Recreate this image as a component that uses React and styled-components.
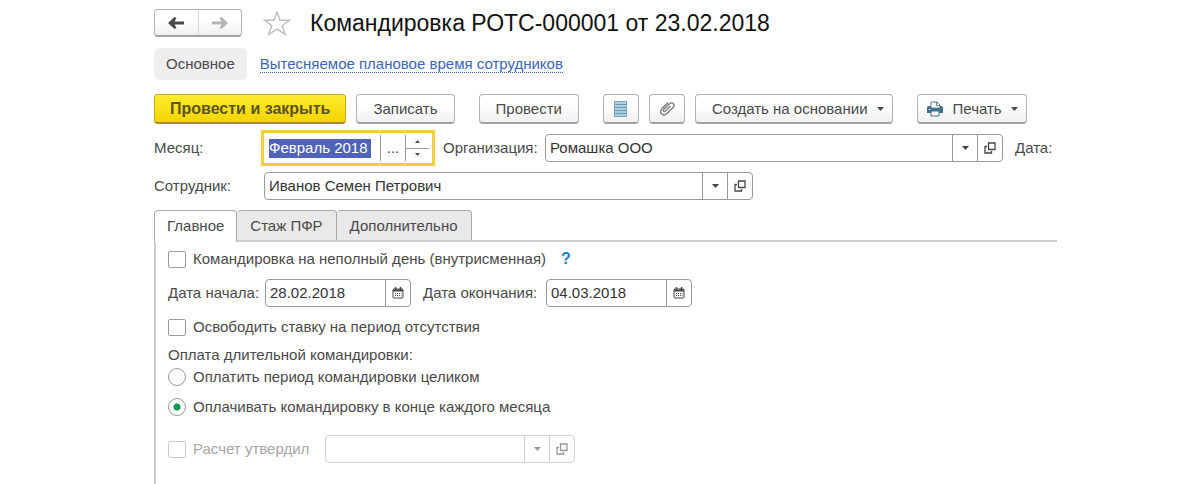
import styled, { createGlobalStyle, css } from "styled-components";

export default function App() {
  return (
    <>
      <GlobalStyle />
      <Page>
        <TitleBar>
          <History>
            <HistoryButton type="button" aria-label="Назад">
              <Arrow />
            </HistoryButton>
            <HistoryButton type="button" aria-label="Вперед" $muted>
              <Arrow right />
            </HistoryButton>
          </History>
          <StarButton type="button" aria-label="В избранное">
            <svg width="28" height="26" viewBox="0 0 28 26" fill="none" stroke="#bdbdbd" strokeWidth="1.4">
              <path d="M14 2l3 8.200h9.500l-7.400 5.600 3.200 8.700-8.300-5.300-8.300 5.300 3.200-8.700-7.400-5.600H11z" />
            </svg>
          </StarButton>
          <Title>Командировка РОТС-000001 от 23.02.2018</Title>
        </TitleBar>

        <Nav>
          <CurrentSection>Основное</CurrentSection>
          <NavLink href="#time">Вытесняемое плановое время сотрудников</NavLink>
        </Nav>

        <Toolbar>
          <ToolGroup>
            <PrimaryButton type="button">Провести и закрыть</PrimaryButton>
            <ToolButton type="button">Записать</ToolButton>
          </ToolGroup>
          <ToolButton type="button">Провести</ToolButton>
          <ToolGroup>
            <IconButton type="button" aria-label="Движения документа">
              <RegisterIcon />
            </IconButton>
            <IconButton type="button" aria-label="Присоединенные файлы">
              <ClipIcon />
            </IconButton>
            <MenuButton type="button">
              Создать на основании
              <Caret />
            </MenuButton>
          </ToolGroup>
          <MenuButton type="button" $compact>
            <PrinterIcon />
            Печать
            <Caret />
          </MenuButton>
        </Toolbar>

        <HeaderRow>
          <HeaderLabel htmlFor="month">Месяц:</HeaderLabel>
          <MonthField>
            <MonthInput id="month" defaultValue="Февраль 2018" />
            <MonthMore type="button" aria-label="Выбрать">...</MonthMore>
            <Spinner>
              <SpinButton type="button" aria-label="Больше"><Caret up small /></SpinButton>
              <SpinButton type="button" aria-label="Меньше"><Caret small /></SpinButton>
            </Spinner>
          </MonthField>
          <OrgLabel htmlFor="org">Организация:</OrgLabel>
          <Field $grow>
            <FieldInput id="org" defaultValue="Ромашка ООО" />
            <FieldButton type="button" aria-label="Список"><Caret /></FieldButton>
            <FieldButton type="button" aria-label="Открыть"><OpenIcon /></FieldButton>
          </Field>
          <DateLabel>Дата:</DateLabel>
        </HeaderRow>

        <EmployeeRow>
          <HeaderLabel htmlFor="employee">Сотрудник:</HeaderLabel>
          <Field $width={489}>
            <FieldInput id="employee" defaultValue="Иванов Семен Петрович" />
            <FieldButton type="button" aria-label="Список"><Caret /></FieldButton>
            <FieldButton type="button" aria-label="Открыть"><OpenIcon /></FieldButton>
          </Field>
        </EmployeeRow>

        <Tabs role="tablist">
          <Tab type="button" role="tab" aria-selected="true" $active>Главное</Tab>
          <Tab type="button" role="tab" aria-selected="false">Стаж ПФР</Tab>
          <Tab type="button" role="tab" aria-selected="false">Дополнительно</Tab>
        </Tabs>

        <Panel role="tabpanel">
          <Line>
            <Option>
              <Checkbox type="checkbox" />
              Командировка на неполный день (внутрисменная)
            </Option>
            <Help type="button" aria-label="Справка">?</Help>
          </Line>

          <Line $top={10}>
            <DateCaption htmlFor="start">Дата начала:</DateCaption>
            <Field $width={146}>
              <FieldInput id="start" defaultValue="28.02.2018" />
              <FieldButton type="button" aria-label="Календарь"><CalendarIcon /></FieldButton>
            </Field>
            <EndCaption htmlFor="end">Дата окончания:</EndCaption>
            <Field $width={146}>
              <FieldInput id="end" defaultValue="04.03.2018" />
              <FieldButton type="button" aria-label="Календарь"><CalendarIcon /></FieldButton>
            </Field>
          </Line>

          <Line $top={10}>
            <Option>
              <Checkbox type="checkbox" />
              Освободить ставку на период отсутствия
            </Option>
          </Line>

          <PayGroup>
            <Legend>Оплата длительной командировки:</Legend>
            <Line $top={2}>
              <Option>
                <Radio type="radio" name="pay" />
                Оплатить период командировки целиком
              </Option>
            </Line>
            <Line $top={10}>
              <Option>
                <Radio type="radio" name="pay" defaultChecked />
                Оплачивать командировку в конце каждого месяца
              </Option>
            </Line>
          </PayGroup>

          <Line $top={18}>
            <ApprovedOption $disabled>
              <Checkbox type="checkbox" disabled />
              Расчет утвердил
            </ApprovedOption>
            <Field $width={250} $disabled>
              <FieldInput aria-label="Расчет утвердил" disabled />
              <FieldButton type="button" aria-label="Список" disabled><Caret /></FieldButton>
              <FieldButton type="button" aria-label="Открыть" disabled><OpenIcon /></FieldButton>
            </Field>
          </Line>
        </Panel>
      </Page>
    </>
  );
}

function Arrow({ right }) {
  return (
    <svg width="18" height="12" viewBox="0 0 18 12" fill="currentColor">
      {right ? (
        <path d="M1 4.500h9.500L8.500 1l2-1 6.500 6-6.500 6-2-1 2-3.500H1z" />
      ) : (
        <path d="M17 4.500H7.500L9.500 1l-2-1L1 6l6.500 6 2-1-2-3.500H17z" />
      )}
    </svg>
  );
}

function Caret({ up, small }) {
  return (
    <svg width={small ? 5 : 7} height={small ? 3 : 4} viewBox="0 0 7 4" fill="currentColor">
      <path d={up ? "M0 4h7L3.500 0z" : "M0 0h7L3.500 4z"} />
    </svg>
  );
}

function OpenIcon() {
  return (
    <svg width="12" height="12" viewBox="0 0 12 12" fill="none" stroke="currentColor" strokeWidth="1.300">
      <path d="M4.500 1h6.500v6.500H4.500zM3 4.500H1V11h6.500V9" />
    </svg>
  );
}

function CalendarIcon() {
  return (
    <svg width="12" height="12" viewBox="0 0 12 12" fill="none" stroke="#444">
      <rect x="1" y="2" width="10" height="9" rx="1" />
      <path d="M1 3.500h10" strokeWidth="2" />
      <path d="M3.500 0v3M8.500 0v3" strokeWidth="1.500" />
      <path d="M3 6.500h6.500M3 8.500h6.500" strokeDasharray="1 1" />
    </svg>
  );
}

function RegisterIcon() {
  return (
    <svg width="13" height="16" viewBox="0 0 13 16" fill="none">
      <rect x=".5" y=".5" width="12" height="15" fill="#a9d0e3" stroke="#7fa5b8" />
      <path d="M1 3.500h11M1 6.500h11M1 9.500h11M1 12.500h11" stroke="#6f97ab" />
    </svg>
  );
}

function ClipIcon() {
  return (
    <svg width="18" height="18" viewBox="0 0 18 18" fill="none" stroke="#777" strokeWidth="1.300" strokeLinecap="round">
      <path d="M12 6.500L7.500 11c-1.400 1.200-3-.3-1.700-1.700l5.700-5.500c2.800-2.300 6 .8 3.700 3.500l-6.200 6.200c-4 3.500-8.500-.6-5.200-4.700L9.500 3" />
    </svg>
  );
}

function PrinterIcon() {
  return (
    <svg width="18" height="16" viewBox="0 0 18 16">
      <path d="M1 6.500Q1 5 2.500 5h13Q17 5 17 6.500V12H1z" fill="#41708f" />
      <path d="M5 7V1h6l3 3v3z" fill="#fff" stroke="#5d7f96" />
      <path d="M10.500 1v3.500H14" fill="none" stroke="#5d7f96" />
      <path d="M5 10h8v5H5z" fill="#fff" stroke="#41708f" />
      <path d="M2.500 8.500h2" stroke="#cfe2ee" />
    </svg>
  );
}

const GlobalStyle = createGlobalStyle`
  * {
    box-sizing: border-box;
  }

  body {
    margin: 0;
    background: #fff;
  }

  body, button, input {
    font-family: "Liberation Sans", Arial, sans-serif;
    font-size: 15px;
    line-height: 20px;
    color: #4a4a4a;
  }

  button {
    padding: 0;
    border: 0;
    background: none;
  }

  svg {
    display: block;
    flex: none;
  }
`;

const Page = styled.main`
  min-height: 100vh;
  padding: 9px 143px 0 154px;
  display: flex;
  flex-direction: column;
  white-space: nowrap;
`;

const raised = css`
  border: 1px solid #b5b5b5;
  border-bottom: 2px solid #a3a3a3;
  border-radius: 4px;
  background: linear-gradient(#fff 40%, #f0f0f0);
`;

const TitleBar = styled.header`
  display: flex;
  align-items: center;
  height: 28px;
`;

const History = styled.div`
  ${raised}
  display: flex;
  width: 88px;
  height: 28px;
`;

const HistoryButton = styled.button`
  flex: 1;
  display: flex;
  align-items: center;
  justify-content: center;
  color: ${({ $muted }) => ($muted ? "#b5b5b5" : "#4a4a4a")};

  & + & {
    border-left: 1px solid #d5d5d5;
  }
`;

const StarButton = styled.button`
  margin: 0 19px 0 21px;
`;

const Title = styled.h1`
  margin: 0;
  font-size: 23px;
  line-height: 28px;
  font-weight: 400;
  color: #111;
`;

const Nav = styled.nav`
  display: flex;
  align-items: center;
  gap: 13px;
  margin-top: 11px;
`;

const CurrentSection = styled.span`
  padding: 6px 12px;
  border-radius: 5px;
  background: #efefef;
`;

const NavLink = styled.a`
  color: #3a66b5;
  text-decoration: none;
  line-height: 17px;
  border-bottom: 1px dotted #3a66b5;
`;

const Toolbar = styled.div`
  display: flex;
  gap: 24px;
  margin-top: 14px;
`;

const ToolGroup = styled.div`
  display: flex;
  gap: 10px;
`;

const ToolButton = styled.button`
  ${raised}
  height: 30px;
  padding: 0 16px;
`;

const PrimaryButton = styled(ToolButton)`
  padding: 0 15px;
  border-color: #c9ab1d;
  border-bottom-color: #a88f1c;
  background: linear-gradient(#ffec2e, #f2d500);
  font-size: 16px;
  font-weight: 700;
  color: #5c5320;
`;

const IconButton = styled(ToolButton)`
  display: flex;
  align-items: center;
  justify-content: center;
  width: 36px;
  padding: 0;
`;

const MenuButton = styled(ToolButton)`
  display: flex;
  align-items: center;
  gap: 9px;
  padding: ${({ $compact }) => ($compact ? "0 8px" : "0 8px 0 16px")};
`;

const HeaderRow = styled.div`
  display: flex;
  align-items: center;
  margin-top: 6px;
`;

const EmployeeRow = styled.div`
  display: flex;
  align-items: center;
  margin-top: 6px;

  label {
    width: 110px;
  }
`;

const HeaderLabel = styled.label`
  width: 107px;
`;

const MonthField = styled.div`
  display: flex;
  align-items: center;
  width: 174px;
  height: 36px;
  padding: 0 3px 0 5px;
  border: 3px solid #f2cd3c;
`;

const MonthInput = styled.input`
  width: 102px;
  height: 19px;
  padding: 0;
  border: 0;
  background: #4f63b8;
  color: #fff;
  margin-right: 9px;
`;

const MonthMore = styled.button`
  width: 25px;
  height: 26px;
  border-left: 1px solid #999;
`;

const Spinner = styled.div`
  flex: 1;
  display: flex;
  flex-direction: column;
  height: 26px;
  border-left: 1px solid #999;
`;

const SpinButton = styled.button`
  flex: 1;
  display: flex;
  align-items: center;
  justify-content: center;

  & + & {
    border-top: 1px solid #999;
  }
`;

const OrgLabel = styled.label`
  width: 102px;
  margin-left: 8px;
`;

const DateLabel = styled.span`
  width: 42px;
  margin-left: 12px;
`;

const Field = styled.div`
  display: flex;
  height: 28px;
  width: ${({ $width }) => ($width ? `${$width}px` : "auto")};
  flex: ${({ $grow }) => ($grow ? "1" : "none")};
  border: 1px solid ${({ $disabled }) => ($disabled ? "#d0d0d0" : "#999")};
  border-radius: 4px;
  color: ${({ $disabled }) => ($disabled ? "#999" : "#444")};

  button {
    border-color: ${({ $disabled }) => ($disabled ? "#d0d0d0" : "#999")};
    color: inherit;
  }
`;

const FieldInput = styled.input`
  flex: 1;
  min-width: 0;
  padding: 0 4px;
  border: 0;
  background: none;
  color: #333;
`;

const FieldButton = styled.button`
  display: flex;
  align-items: center;
  justify-content: center;
  width: 25px;
  border-left: 1px solid;
`;

const Tabs = styled.div`
  display: flex;
  margin-top: 10px;
  border-bottom: 2px solid #ccc;
`;

const Tab = styled.button`
  height: ${({ $active }) => ($active ? 32 : 30)}px;
  margin-bottom: ${({ $active }) => ($active ? -2 : 0)}px;
  padding: ${({ $active }) => ($active ? "0 12px 2px" : "0 13px")};
  border: 1px solid #aaa;
  border-left-width: ${({ $active }) => ($active ? 1 : 0)}px;
  border-bottom: 0;
  border-radius: 4px 4px 0 0;
  background: ${({ $active }) => ($active ? "#fff" : "#e9e9e9")};
`;

const Panel = styled.section`
  flex: 1;
  padding: 7px 0 20px 12px;
  border-left: 2px solid #ccc;
`;

const Line = styled.div`
  display: flex;
  align-items: center;
  margin-top: ${({ $top = 0 }) => $top}px;
`;

const Option = styled.label`
  display: flex;
  align-items: center;
  gap: 7px;
  color: ${({ $disabled }) => ($disabled ? "#a5a5a5" : "inherit")};
`;

const ApprovedOption = styled(Option)`
  width: 157px;
`;

const Checkbox = styled.input`
  appearance: none;
  width: 18px;
  height: 17px;
  margin: 0;
  border: 1px solid #999;
  border-radius: 2px;
  background: #fff;

  &:disabled {
    border-color: #ccc;
  }
`;

const Radio = styled.input`
  appearance: none;
  width: 18px;
  height: 18px;
  margin: 0;
  border: 1px solid #999;
  border-radius: 50%;

  &:checked {
    background: radial-gradient(circle, #149650 3px, #fff 4px);
  }
`;

const Help = styled.button`
  margin-left: 15px;
  color: #1c7fc4;
  font-size: 16px;
  font-weight: 700;
`;

const DateCaption = styled.label`
  width: 97px;
`;

const EndCaption = styled.label`
  width: 123px;
  margin-left: 12px;
`;

const PayGroup = styled.fieldset`
  margin: 8px 0 0;
  padding: 0;
  border: 0;
`;

const Legend = styled.legend`
  padding: 0;
`;
